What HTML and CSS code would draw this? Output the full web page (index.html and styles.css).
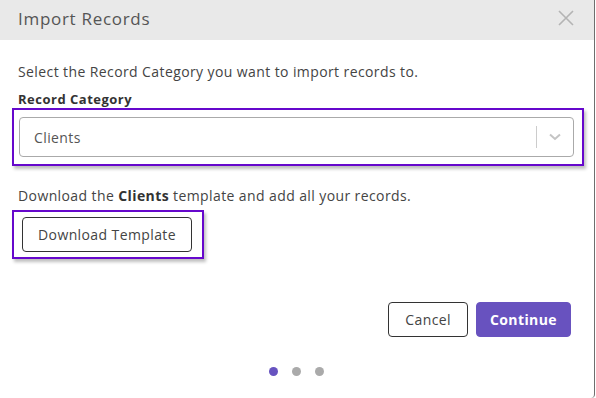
FILE: index.html
```html
<!DOCTYPE html>
<html lang="en">
  <head>
    <meta charset="UTF-8" />
    <meta name="viewport" content="width=device-width, initial-scale=1.0" />
    <title>Import Records</title>
    <link rel="stylesheet" href="styles.css">
  </head>
  <body>
    <div class="modal">
      <header class="modal-header">
        <h1 class="title">Import Records</h1>
        <button class="close" aria-label="Close">
          <svg width="16" height="16" viewBox="0 0 16 16">
            <path d="M1 1 L15 15 M15 1 L1 15" stroke="#b4b4b4" stroke-width="1.6" fill="none" />
          </svg>
        </button>
      </header>

      <main class="modal-body">
        <p class="intro">Select the Record Category you want to import records to.</p>
        <label class="label" for="category">Record Category</label>
        <div class="highlight highlight-select">
          <div class="select" id="category">
            <span class="select-value">Clients</span>
            <span class="select-sep"></span>
            <svg class="chevron" width="12" height="8" viewBox="0 0 12 8">
              <path d="M1 1.5 L6 6 L11 1.5" stroke="#c4c4c4" stroke-width="2" fill="none" />
            </svg>
          </div>
        </div>

        <p class="hint">Download the <b>Clients</b> template and add all your records.</p>
        <div class="highlight highlight-button">
          <button class="button">Download Template</button>
        </div>

        <div class="actions">
          <button class="button">Cancel</button>
          <button class="button button-primary">Continue</button>
        </div>

        <div class="dots">
          <span class="dot active"></span>
          <span class="dot"></span>
          <span class="dot"></span>
        </div>
      </main>
    </div>
  </body>
</html>
```

FILE: styles.css
```css
body {
  margin: 0;
  background-color: rgb(255, 255, 255);
  font-family: "Open Sans", "Liberation Sans", sans-serif;
  color: rgb(68, 68, 68);
  letter-spacing: 0.4px;
}

.modal {
  width: 595px;
  height: 398px;
  border-right: 1px solid rgb(110, 110, 110);
  border-bottom-right-radius: 4px;
  box-sizing: border-box;
  display: flex;
  flex-direction: column;
}

.modal-header {
  background-color: rgb(233, 233, 233);
  height: 40px;
  box-sizing: border-box;
  display: flex;
  align-items: center;
  justify-content: space-between;
  padding: 0 20px 4px 18px;
}

.title {
  margin: 0;
  font-size: 17px;
  font-weight: 400;
  color: rgb(85, 85, 85);
  letter-spacing: 0.7px;
}

.close {
  border: none;
  background: none;
  padding: 0;
  display: flex;
  cursor: pointer;
}

.modal-body {
  padding: 0 21px 0 18px;
  display: flex;
  flex-direction: column;
  flex: 1;
}

.intro {
  margin: 22px 0 0;
  font-size: 14px;
  line-height: 20px;
}

.label {
  margin-top: 8px;
  font-size: 13px;
  font-weight: 700;
  color: rgb(51, 51, 51);
  line-height: 18px;
  letter-spacing: 0.5px;
}

.highlight {
  border: 2px solid rgb(102, 8, 204);
  box-shadow: 2px 3px 3px rgba(0, 0, 0, 0.25);
  box-sizing: border-box;
}

.highlight-select {
  margin: 0 0 0 -6px;
  width: 572px;
  height: 58px;
  padding: 7px 8px 7px 5px;
}

.select {
  height: 40px;
  border: 1px solid rgb(170, 170, 170);
  border-radius: 4px;
  box-sizing: border-box;
  display: flex;
  align-items: center;
  padding: 0 12px 0 14px;
}

.select-value {
  flex: 1;
  font-size: 14px;
  color: rgb(85, 85, 85);
}

.select-sep {
  width: 1px;
  height: 22px;
  background-color: rgb(204, 204, 204);
  margin-right: 12px;
}

.hint {
  margin: 20px 0 0;
  font-size: 14px;
  line-height: 20px;
}

.hint b {
  color: rgb(51, 51, 51);
}

.highlight-button {
  margin: 4px 0 0 -6px;
  width: 192px;
  height: 49px;
  padding: 5px 0 0 8px;
}

.button {
  font-family: inherit;
  font-size: 14px;
  letter-spacing: 0.4px;
  color: rgb(68, 68, 68);
  background-color: rgb(255, 255, 255);
  border: 1px solid rgb(51, 51, 51);
  border-radius: 4px;
  height: 35px;
  padding: 0 15px;
  cursor: pointer;
}

.actions {
  margin-top: 43px;
  display: flex;
  justify-content: flex-end;
  gap: 8px;
  padding-right: 2px;
}

.actions .button {
  padding: 0 16px;
}

.actions .button-primary {
  padding: 0 13px;
}

.button-primary {
  background-color: rgb(104, 82, 191);
  border-color: rgb(104, 82, 191);
  color: rgb(255, 255, 255);
  font-weight: 700;
}

.dots {
  margin-top: 30px;
  display: flex;
  justify-content: center;
  gap: 14px;
  padding-left: 2px;
}

.dot {
  width: 9px;
  height: 9px;
  border-radius: 50%;
  background-color: rgb(170, 170, 170);
}

.dot.active {
  background-color: rgb(103, 83, 192);
}
```
